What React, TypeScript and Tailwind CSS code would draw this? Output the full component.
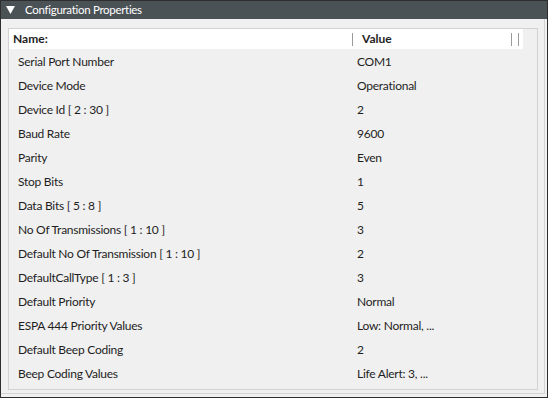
import React from "react";

const rows: [string, string][] = [
  ["Serial Port Number", "COM1"],
  ["Device Mode", "Operational"],
  ["Device Id [ 2 : 30 ]", "2"],
  ["Baud Rate", "9600"],
  ["Parity", "Even"],
  ["Stop Bits", "1"],
  ["Data Bits [ 5 : 8 ]", "5"],
  ["No Of Transmissions [ 1 : 10 ]", "3"],
  ["Default No Of Transmission [ 1 : 10 ]", "2"],
  ["DefaultCallType [ 1 : 3 ]", "3"],
  ["Default Priority", "Normal"],
  ["ESPA 444 Priority Values", "Low: Normal, ..."],
  ["Default Beep Coding", "2"],
  ["Beep Coding Values", "Life Alert: 3, ..."],
];

export default function App() {
  return (
    <div
      className="w-[548px] h-[398px] border border-[#2e2e2e] bg-[#f0f0f0] flex flex-col text-[12px] text-[#1e1e1e] tracking-[-0.25px]"
      style={{ fontFamily: 'Lato, "Noto Sans", sans-serif' }}
    >
      <div className="h-[18px] bg-[#4b5256] flex items-center text-white shrink-0">
        <svg width="9" height="8" viewBox="0 0 9 8" className="ml-[5px]">
          <polygon points="0,0 9,0 4.5,8" fill="#ffffff" />
        </svg>
        <span className="ml-[10px] leading-none text-[11.5px] tracking-[-0.3px]">Configuration Properties</span>
      </div>
      <div className="flex-1 flex flex-col mr-[2px] mb-[3px] border-r border-b border-[#d4d4d4] pl-[7px] pt-[9px] pr-[6px] pb-[3px]">
        <div className="flex-1 border border-[#d2d2d2] flex flex-col">
          <div className="h-[20px] mr-[14px] bg-white flex items-center shrink-0">
            <div className="w-[343px] pl-[4px] font-bold tracking-normal">Name:</div>
            <div className="w-px h-[13px] bg-[#9a9a9a]" />
            <div className="w-[158px] pl-[9px] font-bold tracking-normal">Value</div>
            <div className="w-px h-[13px] bg-[#9a9a9a]" />
            <div className="w-[6px]" />
            <div className="w-px h-[13px] bg-[#9a9a9a]" />
          </div>
          <div className="flex flex-col pt-[1px]">
            {rows.map(([n, v]) => (
              <div key={n} className="h-[24px] flex items-center">
                <div className="w-[344px] pl-[9px] whitespace-nowrap">{n}</div>
                <div className="pl-[4px] whitespace-nowrap">{v}</div>
              </div>
            ))}
          </div>
        </div>
      </div>
    </div>
  );
}
